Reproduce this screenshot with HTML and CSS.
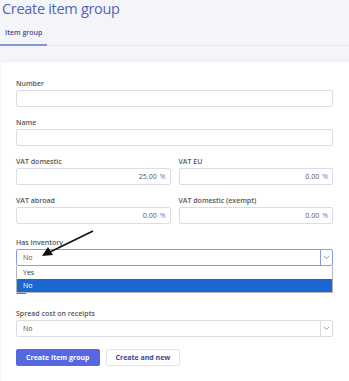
FILE: index.html
```html
<!DOCTYPE html>
<html lang="en">
<head>
  <meta charset="UTF-8">
  <meta name="viewport" content="width=device-width, height=device-height">
  <link rel="stylesheet" href="styles.css">
</head>
<body>
  <h1 class="page-title">Create item group</h1>

  <div class="tabs">
    <div class="tab active">Item group</div>
  </div>

  <div class="card">
    <div class="field">
      <label>Number</label>
      <div class="input"></div>
    </div>

    <div class="field">
      <label>Name</label>
      <div class="input"></div>
    </div>

    <div class="row">
      <div class="field">
        <label>VAT domestic</label>
        <div class="input num">25.00<span class="unit">%</span></div>
      </div>
      <div class="field">
        <label>VAT EU</label>
        <div class="input num">0.00<span class="unit">%</span></div>
      </div>
    </div>

    <div class="row">
      <div class="field">
        <label>VAT abroad</label>
        <div class="input num">0.00<span class="unit">%</span></div>
      </div>
      <div class="field">
        <label>VAT domestic (exempt)</label>
        <div class="input num">0.00<span class="unit">%</span></div>
      </div>
    </div>

    <div class="field inventory">
      <label>Has inventory</label>
      <div class="select-wrap">
        <div class="select focused">
          <span class="value">No</span>
          <span class="caret"><svg width="7" height="5" viewBox="0 0 7 5"><path d="M1 1 L3.5 3.5 L6 1" fill="none" stroke="#8a8fa8" stroke-width="0.9"/></svg></span>
        </div>
        <ul class="options">
          <li>Yes</li>
          <li class="selected">No</li>
        </ul>
      </div>
    </div>

    <div class="check-row">
      <span class="checkbox"></span>
      <span class="check-label">Is a stock group</span>
    </div>

    <div class="field">
      <label>Spread cost on receipts</label>
      <div class="select">
        <span class="value">No</span>
        <span class="caret"><svg width="7" height="5" viewBox="0 0 7 5"><path d="M1 1 L3.5 3.5 L6 1" fill="none" stroke="#8a8fa8" stroke-width="0.9"/></svg></span>
      </div>
    </div>

    <div class="actions">
      <button class="btn primary">Create item group</button>
      <button class="btn">Create and new</button>
    </div>
  </div>

  <!-- annotation arrow -->
  <svg class="pointer" width="349" height="381" viewBox="0 0 349 381">
    <line x1="93" y1="231" x2="50" y2="252" stroke="#111" stroke-width="1.6"/>
    <polygon points="42,256 48,247 53,255" fill="#111"/>
  </svg>
</body>
</html>
```

FILE: styles.css
```css
body {
  margin: 0;
  background: #f4f5f9;
  font-family: "Open Sans", "Liberation Sans", sans-serif;
  color: #555;
  position: relative;
  height: 381px;
  overflow: hidden;
}

.page-title {
  margin: 0 0 0 2px;
  font-size: 14.5px;
  line-height: 18px;
  font-weight: 400;
  letter-spacing: -0.3px;
  color: #5664b8;
}

.tabs {
  display: flex;
  margin-top: 2px;
  border-bottom: 1px solid #e6e8ef;
}

.tab {
  padding: 8px 5px 6px;
  line-height: 10px;
  font-size: 7px;
  font-weight: 600;
  color: #3f4b9c;
}

.tab.active {
  border-bottom: 2px solid #8b95d9;
  margin-bottom: -1px;
}

.card {
  margin: 15px 0 0 1px;
  background: #fff;
  border-top: 1px solid #eceef3;
  padding: 17px 16px 20px 15px;
}

.field {
  margin-bottom: 11px;
}

.field.inventory {
  margin-top: 3px;
}

.field label {
  display: block;
  font-size: 7px;
  line-height: 10px;
  font-weight: 600;
  color: #555;
  margin-bottom: 1px;
}

.input {
  height: 15px;
  border: 1px solid #dcdde2;
  border-radius: 2px;
  font-size: 7px;
  line-height: 15px;
  color: #555;
  padding: 0 4px;
}

.input.num {
  text-align: right;
}

.unit {
  margin-left: 3px;
  color: #6e7dd1;
}

.row {
  display: grid;
  grid-template-columns: 1fr 1fr;
  column-gap: 8px;
}

.select-wrap {
  position: relative;
}

.select {
  display: flex;
  height: 15px;
  border: 1px solid #dcdde2;
  border-radius: 2px;
  font-size: 7px;
  line-height: 15px;
}

.select.focused {
  border-color: #8e99e6;
}

.select .value {
  flex: 1;
  padding-left: 6px;
  color: #555;
}

.select .caret {
  width: 11px;
  border-left: 1px solid #dcdde2;
  display: flex;
  align-items: center;
  justify-content: center;
}

.select.focused .caret {
  border-left-color: #8e99e6;
}

.options {
  position: absolute;
  top: 100%;
  left: 0;
  right: 0;
  margin: 0;
  padding: 0;
  list-style: none;
  background: #fff;
  border: 1px solid #b5b5b5;
  border-top: none;
  z-index: 2;
  font-size: 7px;
}

.options li {
  height: 13px;
  line-height: 13px;
  padding-left: 6px;
  color: #333;
}

.options li.selected {
  background: #1a67d2;
  color: #fff;
}

.check-row {
  display: flex;
  align-items: flex-end;
  gap: 6px;
  height: 17px;
  padding-bottom: 4px;
  margin-bottom: 11px;
}

.checkbox {
  width: 11px;
  height: 11px;
  border-radius: 2px;
  background: #5468e0;
}

.check-label {
  font-size: 7px;
  line-height: 11px;
  color: #555;
}

.actions {
  display: flex;
  gap: 6px;
  margin-top: 12px;
}

.btn {
  height: 17px;
  padding: 0 9px;
  border: 1px solid #e3e4e8;
  border-radius: 2px;
  background: #fff;
  font-family: inherit;
  font-size: 7px;
  font-weight: 700;
  color: #3b4899;
}

.btn.primary {
  background: #5468e0;
  border-color: #5468e0;
  color: #fff;
}

.pointer {
  position: absolute;
  top: 0;
  left: 0;
  z-index: 5;
  pointer-events: none;
}

* {
  -webkit-user-select: none;
}
```
